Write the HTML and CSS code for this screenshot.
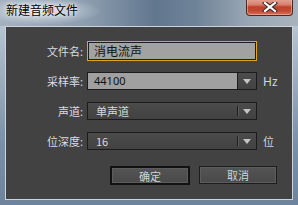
FILE: index.html
```html
<!DOCTYPE html>
<html lang="zh">
<head>
<meta charset="utf-8">
<title>新建音频文件</title>
<link rel="stylesheet" href="styles.css">
</head>
<body>
<div class="window">
  <div class="titlebar">
    <span class="title">新建音频文件</span>
    <button class="close" aria-label="关闭">
      <svg width="16" height="10" viewBox="0 0 16 10">
        <path d="M3 1 L13 9 M13 1 L3 9" stroke="#3a2a2a" stroke-width="4.2" stroke-linecap="square"/>
        <path d="M3 1 L13 9 M13 1 L3 9" stroke="#ffffff" stroke-width="2.2" stroke-linecap="square"/>
      </svg>
    </button>
  </div>
  <div class="content">
    <div class="form">
      <div class="row row-first">
        <span class="label">文件名:</span>
        <div class="input">消电流声</div>
      </div>
      <div class="row">
        <span class="label">采样率:</span>
        <div class="select select-light">
          <span class="value">44100</span>
          <span class="arrow"><span class="tri"></span></span>
        </div>
        <span class="unit unit-hz">Hz</span>
      </div>
      <div class="row">
        <span class="label">声道:</span>
        <div class="select select-dark">
          <span class="value">单声道</span>
          <span class="arrow"><span class="tri"></span></span>
        </div>
      </div>
      <div class="row">
        <span class="label">位深度:</span>
        <div class="select select-dark">
          <span class="value">16</span>
          <span class="arrow"><span class="tri"></span></span>
        </div>
        <span class="unit">位</span>
      </div>
    </div>
    <div class="buttons">
      <button class="btn btn-default">确定</button>
      <button class="btn">取消</button>
    </div>
  </div>
</div>
</body>
</html>
```
FILE: styles.css
```css
* { box-sizing: border-box; }
html, body { margin: 0; padding: 0; background: #7f93a8; }
body { font-family: "Noto Sans CJK SC", "Noto Sans", sans-serif; }

.window {
  width: 298px;
  height: 205px;
  display: flex;
  flex-direction: column;
  background: linear-gradient(to bottom, #c4cfda 0%, #9fb0c1 35%, #7a90a7 70%, #6d849c 100%);
  overflow: hidden;
}

.titlebar {
  position: relative;
  height: 26px;
  flex: none;
  background:
    radial-gradient(ellipse 60px 14px at 42px 11px, rgba(235,240,245,0.75), rgba(235,240,245,0) 100%),
    linear-gradient(to right, #a4b2c0 0%, #8b9cae 30%, #61778e 52%, #6f8398 66%, #97a5b3 82%, #a9b3be 100%);
}

.title {
  position: absolute;
  left: 6px;
  top: 3px;
  font-size: 12px;
  line-height: 14px;
  color: #000;
  text-shadow: 0 0 6px rgba(255,255,255,0.9), 0 0 3px rgba(255,255,255,0.9);
}

.close {
  position: absolute;
  left: 246px;
  top: -1px;
  width: 47px;
  height: 17px;
  margin: 0;
  padding: 0;
  border: 1px solid #4c2a24;
  border-top: none;
  border-radius: 0 0 4px 4px;
  background: linear-gradient(to bottom, #e6a596 0%, #d7826f 35%, #c0412b 50%, #c24a33 75%, #d7735d 100%);
  box-shadow: inset 0 0 0 1px rgba(255,210,200,0.45);
  display: flex;
  align-items: center;
  justify-content: center;
}
.close svg { display: block; }

.content {
  flex: 1;
  margin: 0 5px 5px 5px;
  border: 1px solid #cbd4dd;
  background: #424242;
  display: flex;
  flex-direction: column;
}

.form {
  padding-top: 14px;
  display: flex;
  flex-direction: column;
  gap: 12px;
}

.row {
  display: flex;
  align-items: center;
  height: 18px;
}
.row-first { height: 20px; margin-bottom: -1px; }

.label {
  width: 77px;
  margin-right: 4px;
  text-align: right;
  font-size: 11px;
  color: #d9dde2;
  white-space: nowrap;
}

.input {
  width: 170px;
  height: 20px;
  border: 1px solid #e5a31a;
  box-shadow: inset 0 0 0 1px #1e1e1e;
  background: #a2a2a2;
  color: #111;
  font-size: 12px;
  line-height: 18px;
  padding-left: 6px;
}

.select {
  width: 170px;
  height: 18px;
  border: 1px solid #1c1c1c;
  display: flex;
  font-size: 11px;
}
.select .value {
  flex: 1;
  line-height: 16px;
  padding-left: 8px;
}
.select .arrow {
  width: 19px;
  display: flex;
  align-items: center;
  justify-content: center;
  position: relative;
}
.tri {
  width: 0;
  height: 0;
  border-left: 4px solid transparent;
  border-right: 4px solid transparent;
  border-top: 5px solid #c4c4c4;
}

.select-light .value {
  background: #a0a0a0;
  color: #111;
  padding-left: 6px;
  font-family: "Noto Sans", "Noto Sans CJK SC", sans-serif;
}
.select-light .arrow {
  background: linear-gradient(to bottom, #4c4c4c, #434343);
  border-left: 1px solid #1c1c1c;
}

.select-dark {
  background: linear-gradient(to bottom, #4b4b4b, #424242);
}
.select-dark .value { color: #d6d9dd; }
.select-dark .arrow::before {
  content: "";
  position: absolute;
  left: 0;
  top: 3px;
  bottom: 3px;
  width: 1px;
  background: #1e1e1e;
  box-shadow: 1px 0 0 #5a5a5a;
}

.unit {
  margin-left: 6px;
  font-size: 11px;
  color: #cfd6de;
}
.unit-hz { font-family: "Noto Sans", sans-serif; font-size: 12px; }

.buttons {
  margin-top: 16px;
  display: flex;
  justify-content: flex-end;
  gap: 9px;
  padding-right: 15px;
}

.btn {
  width: 78px;
  height: 18px;
  margin: 0;
  padding: 0;
  border: 1px solid #1c1c1c;
  background: linear-gradient(to bottom, #545454, #494949);
  box-shadow: inset 0 0 0 1px #5d5d5d;
  color: #cfd3d8;
  font-family: "Noto Sans CJK SC", sans-serif;
  font-size: 11px;
  line-height: 16px;
}
.btn-default {
  width: 80px;
  height: 19px;
  border: 2px solid #121212;
}
```
